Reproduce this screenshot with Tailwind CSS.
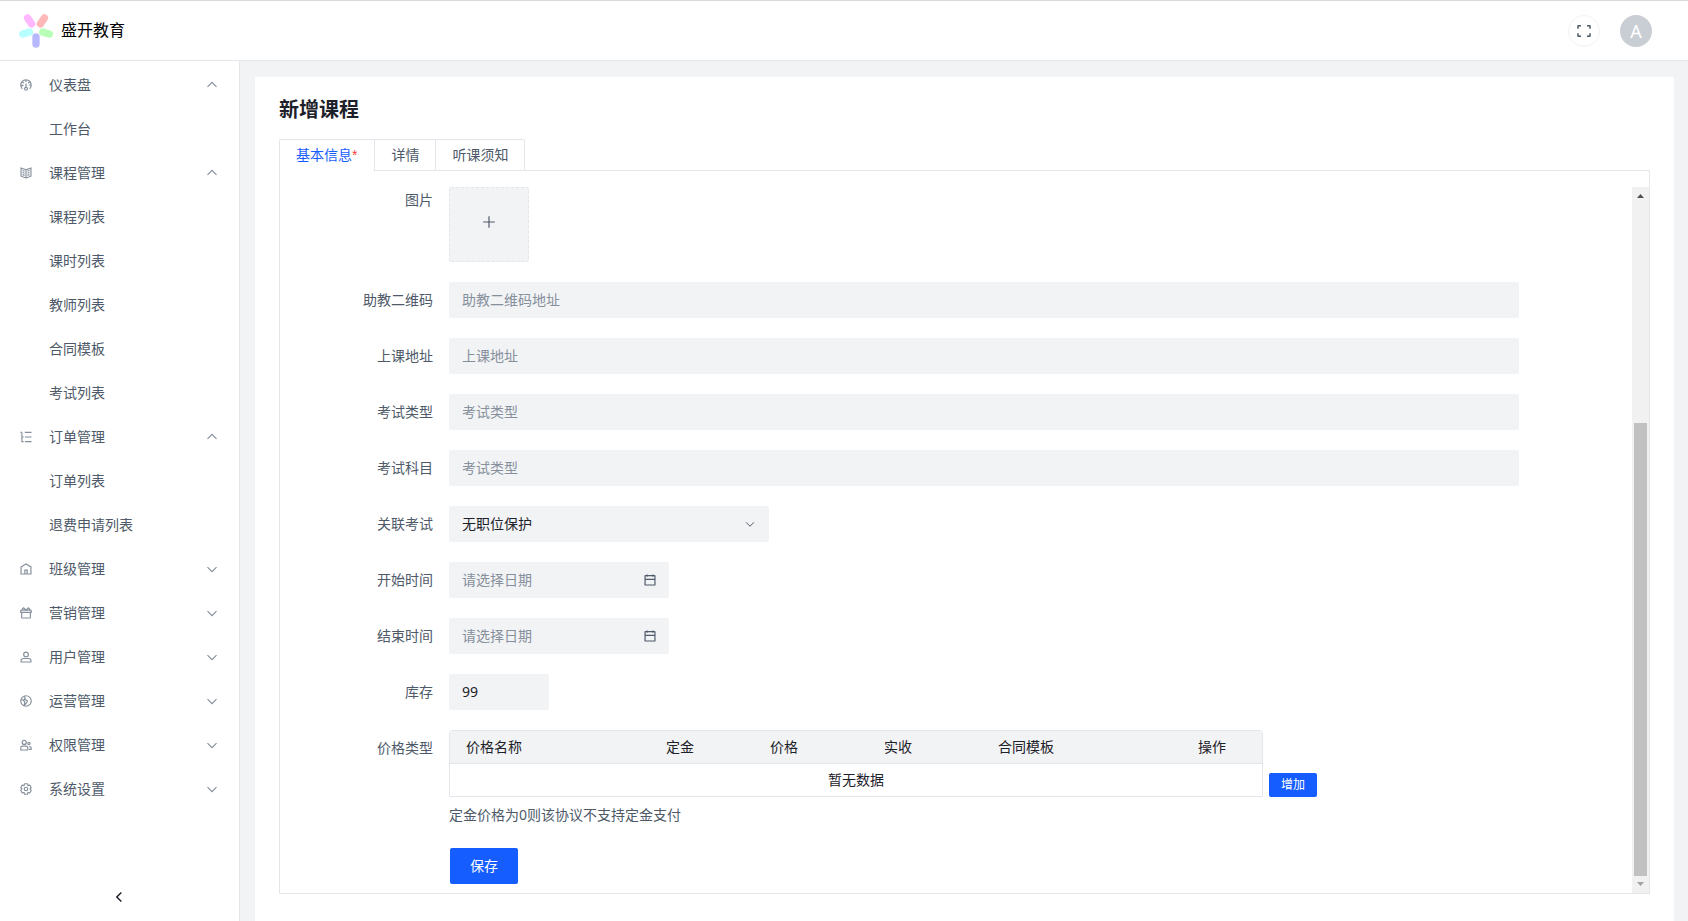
<!DOCTYPE html>
<html lang="zh-CN">
<head>
<meta charset="utf-8">
<meta name="viewport" content="width=device-width, initial-scale=1">
<title>盛开教育 - 新增课程</title>
<script src="https://cdn.jsdelivr.net/npm/@tailwindcss/browser@4"></script>
</head>
<body class="flex h-screen flex-col overflow-hidden border-t border-[#dadada] bg-[#f2f3f5] font-['Noto_Sans','Noto_Sans_CJK_SC',sans-serif] text-sm text-[#4e5969]">

<svg class="hidden" aria-hidden="true">
  <symbol id="down" viewBox="0 0 48 48"><path d="M39.6 17.443 24.043 33 8.487 17.443"/></symbol>
  <symbol id="up" viewBox="0 0 48 48"><path d="M39.6 30.557 24.043 15 8.487 30.557"/></symbol>
  <symbol id="calendar" viewBox="0 0 48 48"><path d="M7 22h34M14 5v8m20-8v8M8 41h32a1 1 0 0 0 1-1V10a1 1 0 0 0-1-1H8a1 1 0 0 0-1 1v30a1 1 0 0 0 1 1Z"/></symbol>
</svg>

<header class="flex h-15 shrink-0 items-center justify-between border-b border-[#e5e6eb] bg-white pr-9 pl-4">
  <div class="flex items-center gap-[5px]">
    <svg class="size-10" viewBox="0 0 40 40" fill="none" stroke-width="7.4" stroke-linecap="round" aria-hidden="true">
      <path stroke="#ffb8ff" d="M11.600 7l4 5.800"/>
      <path stroke="#ffb8b8" d="M28.400 7l-4 5.800"/>
      <path stroke="#b8ffff" d="M6.800 23l6.600-1.900"/>
      <path stroke="#b8ffb8" d="M33.400 23l-6.600-1.900"/>
      <path stroke="#b8b8ff" d="M20 26v7"/>
    </svg>
    <h1 class="pb-0.5 text-base leading-6 text-black">盛开教育</h1>
  </div>
  <div class="flex items-center gap-5">
    <button type="button" aria-label="全屏" class="flex size-8 items-center justify-center rounded-full border border-[#f2f3f5]">
      <svg class="size-4" viewBox="0 0 48 48" fill="none" stroke="currentColor" stroke-width="4.500" aria-hidden="true"><path d="M42 17V9a1 1 0 0 0-1-1h-8M6 17V9a1 1 0 0 1 1-1h8m27 23v8a1 1 0 0 1-1 1h-8M6 31v8a1 1 0 0 0 1 1h8"/></svg>
    </button>
    <button type="button" aria-label="账户" class="flex size-8 items-center justify-center rounded-full bg-[#c9cdd4] text-lg text-white">A</button>
  </div>
</header>

<div class="flex min-h-0 flex-1">
  <aside class="flex w-60 shrink-0 flex-col border-r border-[#e5e6eb] bg-white">
    <nav class="flex flex-1 flex-col gap-1 py-1 pr-5 pl-[19px] leading-10">
      <button type="button" class="flex items-center text-left">
        <svg class="mr-4 size-3.5 text-[#86909c]" viewBox="0 0 48 48" fill="none" stroke="currentColor" stroke-width="4"><path d="M41.808 24c.118 4.63-1.486 9.333-5.21 13m5.21-13h-8.309m8.309 0c-.112-4.38-1.767-8.694-4.627-12M24 6c5.531 0 10.07 2.404 13.18 6M24 6c-5.724 0-10.384 2.574-13.5 6.38M24 6v7.5M37.18 12 31 17.5m-20.5-5.12L17 17.5m-6.5-5.12C6.99 16.662 5.44 22.508 6.53 28m4.872 9c-2.65-2.609-4.226-5.742-4.873-9m0 0 8.97-3.5M24 32a5 5 0 1 0 0 10 5 5 0 0 0 0-10Zm0 0V19"/></svg>
        <span class="flex-1">仪表盘</span>
        <svg class="size-3.5 text-[#86909c]" fill="none" stroke="currentColor" stroke-width="4"><use href="#up"/></svg>
      </button>
      <a href="#" class="pl-[30px]">工作台</a>
      <button type="button" class="flex items-center text-left">
        <svg class="mr-4 size-3.5 text-[#86909c]" viewBox="0 0 48 48" fill="none" stroke="currentColor" stroke-width="4"><path d="M24 13 7 7v28l17 6 17-6V7l-17 6Zm0 0v27.500M29 18l7-2.500M29 25l7-2.500M29 32l7-2.500M19 18l-7-2.500m7 9.500-7-2.500m7 9.500-7-2.500"/></svg>
        <span class="flex-1">课程管理</span>
        <svg class="size-3.5 text-[#86909c]" fill="none" stroke="currentColor" stroke-width="4"><use href="#up"/></svg>
      </button>
      <a href="#" class="pl-[30px]">课程列表</a>
      <a href="#" class="pl-[30px]">课时列表</a>
      <a href="#" class="pl-[30px]">教师列表</a>
      <a href="#" class="pl-[30px]">合同模板</a>
      <a href="#" class="pl-[30px]">考试列表</a>
      <button type="button" class="flex items-center text-left">
        <svg class="mr-4 size-3.5 text-[#86909c]" viewBox="0 0 48 48" fill="none" stroke="currentColor" stroke-width="4"><path d="M20 8h23M20 24h23M20 40h23M10 10v30h6M10 24h6M5 8h6"/></svg>
        <span class="flex-1">订单管理</span>
        <svg class="size-3.5 text-[#86909c]" fill="none" stroke="currentColor" stroke-width="4"><use href="#up"/></svg>
      </button>
      <a href="#" class="pl-[30px]">订单列表</a>
      <a href="#" class="pl-[30px]">退费申请列表</a>
      <button type="button" class="flex items-center text-left">
        <svg class="mr-4 size-3.5 text-[#86909c]" viewBox="0 0 48 48" fill="none" stroke="currentColor" stroke-width="4"><path d="M7 17 24 7l17 10v24H7V17ZM20 28h8v13h-8V28Z"/></svg>
        <span class="flex-1">班级管理</span>
        <svg class="size-3.5 text-[#86909c]" fill="none" stroke="currentColor" stroke-width="4"><use href="#down"/></svg>
      </button>
      <button type="button" class="flex items-center text-left">
        <svg class="mr-4 size-3.5 text-[#86909c]" viewBox="0 0 48 48" fill="none" stroke="currentColor" stroke-width="4"><path d="M13.450 14.043H8a2 2 0 0 0-2 2v6h36v-6a2 2 0 0 0-2-2h-5.450m-21.100 0L11.500 10 16 6l8 8 8-8 4.500 4-1.950 4.043m-21.100 0h21.100M9 22.043h30v17a2 2 0 0 1-2 2H11a2 2 0 0 1-2-2v-17Z"/></svg>
        <span class="flex-1">营销管理</span>
        <svg class="size-3.5 text-[#86909c]" fill="none" stroke="currentColor" stroke-width="4"><use href="#down"/></svg>
      </button>
      <button type="button" class="flex items-center text-left">
        <svg class="mr-4 size-3.5 text-[#86909c]" viewBox="0 0 48 48" fill="none" stroke="currentColor" stroke-width="4"><path d="M7 37c0-4.970 4.030-8 9-8h16c4.970 0 9 3.030 9 8v3a1 1 0 0 1-1 1H8a1 1 0 0 1-1-1v-3Z"/><circle cx="24" cy="15" r="8"/></svg>
        <span class="flex-1">用户管理</span>
        <svg class="size-3.5 text-[#86909c]" fill="none" stroke="currentColor" stroke-width="4"><use href="#down"/></svg>
      </button>
      <button type="button" class="flex items-center text-left">
        <svg class="mr-4 size-3.5 text-[#86909c]" viewBox="0 0 48 48" fill="none" stroke="currentColor" stroke-width="4"><path d="M15 21.500 6.704 19M15 21.500l4.683 5.152a1 1 0 0 1 .25.814L18 40.976l10.918-16.117a1 1 0 0 0-.298-1.409L21.500 19 15 21.500Zm0 0 6.062-6.995a1 1 0 0 0 .138-1.103L18 7.024M42 24c0 9.941-8.059 18-18 18S6 33.941 6 24 14.059 6 24 6s18 8.059 18 18Z"/></svg>
        <span class="flex-1">运营管理</span>
        <svg class="size-3.5 text-[#86909c]" fill="none" stroke="currentColor" stroke-width="4"><use href="#down"/></svg>
      </button>
      <button type="button" class="flex items-center text-left">
        <svg class="mr-4 size-3.5 text-[#86909c]" viewBox="0 0 48 48" fill="none" stroke="currentColor" stroke-width="4"><circle cx="18" cy="15" r="7"/><circle cx="34" cy="19" r="4"/><path d="M6 34a6 6 0 0 1 6-6h12a6 6 0 0 1 6 6v6a1 1 0 0 1-1 1H7a1 1 0 0 1-1-1v-6ZM34 30h4a4 4 0 0 1 4 4v4a1 1 0 0 1-1 1h-7"/></svg>
        <span class="flex-1">权限管理</span>
        <svg class="size-3.5 text-[#86909c]" fill="none" stroke="currentColor" stroke-width="4"><use href="#down"/></svg>
      </button>
      <button type="button" class="flex items-center text-left">
        <svg class="mr-4 size-3.5 text-[#86909c]" viewBox="0 0 48 48" fill="none" stroke="currentColor" stroke-width="4"><path d="M18.797 6.732A1 1 0 0 1 19.760 6h8.480a1 1 0 0 1 .964.732l1.285 4.628a1 1 0 0 0 1.213.7l4.651-1.200a1 1 0 0 1 1.116.468l4.240 7.344a1 1 0 0 1-.153 1.200L38.193 23.300a1 1 0 0 0 0 1.402l3.364 3.427a1 1 0 0 1 .153 1.200l-4.240 7.344a1 1 0 0 1-1.116.468l-4.650-1.200a1 1 0 0 0-1.214.7l-1.285 4.628a1 1 0 0 1-.964.732h-8.480a1 1 0 0 1-.963-.732L17.510 36.640a1 1 0 0 0-1.213-.7l-4.650 1.200a1 1 0 0 1-1.116-.468l-4.240-7.344a1 1 0 0 1 .153-1.200L9.809 24.700a1 1 0 0 0 0-1.402l-3.364-3.427a1 1 0 0 1-.153-1.200l4.240-7.344a1 1 0 0 1 1.116-.468l4.650 1.200a1 1 0 0 0 1.213-.7l1.286-4.628ZM30 24a6 6 0 1 1-12 0 6 6 0 0 1 12 0Z"/></svg>
        <span class="flex-1">系统设置</span>
        <svg class="size-3.5 text-[#86909c]" fill="none" stroke="currentColor" stroke-width="4"><use href="#down"/></svg>
      </button>
    </nav>
    <button type="button" aria-label="收起菜单" class="flex h-12 shrink-0 items-center justify-center pr-0.5 text-[#1d2129]">
      <svg class="size-3.5" viewBox="0 0 48 48" fill="none" stroke="currentColor" stroke-width="5"><path d="M32 8.400 16.444 23.956 32 39.513"/></svg>
    </button>
  </aside>

  <main class="mt-4 mr-3.5 ml-[15px] min-w-0 flex-1 bg-white px-6 pt-4">
    <h2 class="text-xl leading-[34px] font-bold text-[#1d2129]">新增课程</h2>

    <div role="tablist" class="mt-3 flex h-8 leading-[30px]">
      <button type="button" role="tab" aria-selected="true" class="flex rounded-tl-xs border-t border-l border-[#e5e6eb] pr-[17px] pl-4 text-[#165dff]">基本信息<span class="font-['Liberation_Sans',sans-serif] text-[#f53f3f]">*</span></button>
      <button type="button" role="tab" aria-selected="false" class="border border-r-0 border-[#e5e6eb] px-4">详情</button>
      <button type="button" role="tab" aria-selected="false" class="rounded-tr-xs border border-[#e5e6eb] px-4">听课须知</button>
      <div class="flex-1 border-b border-[#e5e6eb]"></div>
    </div>

    <div class="flex border border-t-0 border-[#e5e6eb] pt-4">
      <form class="grid min-w-0 flex-1 grid-cols-[153px_minmax(0,1fr)] gap-x-4 gap-y-5 pr-[113px] pb-[9px] [&>label]:text-right [&>label]:leading-9 [&>span]:text-right">
        <span class="leading-[26px]">图片</span>
        <button type="button" aria-label="上传图片" class="flex h-[75px] w-20 items-center justify-center rounded-xs border border-dashed border-[#e5e6eb] bg-[#f2f3f5] pb-1.5">
          <svg class="size-3.5" viewBox="0 0 48 48" fill="none" stroke="currentColor" stroke-width="4"><path d="M4 24h40M24 4v40"/></svg>
        </button>

        <label for="qr">助教二维码</label>
        <input id="qr" type="text" placeholder="助教二维码地址" class="h-9 w-full rounded-xs bg-[#f2f3f5] px-[13px] pb-0.5 text-[#1d2129] placeholder:text-[#86909c]">

        <label for="address">上课地址</label>
        <input id="address" type="text" placeholder="上课地址" class="h-9 w-full rounded-xs bg-[#f2f3f5] px-[13px] pb-0.5 text-[#1d2129] placeholder:text-[#86909c]">

        <label for="exam-type">考试类型</label>
        <input id="exam-type" type="text" placeholder="考试类型" class="h-9 w-full rounded-xs bg-[#f2f3f5] px-[13px] pb-0.5 text-[#1d2129] placeholder:text-[#86909c]">

        <label for="exam-subject">考试科目</label>
        <input id="exam-subject" type="text" placeholder="考试类型" class="h-9 w-full rounded-xs bg-[#f2f3f5] px-[13px] pb-0.5 text-[#1d2129] placeholder:text-[#86909c]">

        <label for="exam">关联考试</label>
        <div class="relative w-80">
          <select id="exam" class="h-9 w-full appearance-none rounded-xs bg-[#f2f3f5] px-[13px] text-[#1d2129]"><option>无职位保护</option></select>
          <svg class="pointer-events-none absolute top-3 right-[13px] size-3" fill="none" stroke="currentColor" stroke-width="4"><use href="#down"/></svg>
        </div>

        <label for="start">开始时间</label>
        <div class="flex h-9 w-55 items-center rounded-xs bg-[#f2f3f5] pr-3 pl-[13px]">
          <input id="start" type="text" placeholder="请选择日期" class="min-w-0 flex-1 text-[#1d2129] placeholder:text-[#86909c]">
          <svg class="size-3.5" fill="none" stroke="currentColor" stroke-width="4"><use href="#calendar"/></svg>
        </div>

        <label for="end">结束时间</label>
        <div class="flex h-9 w-55 items-center rounded-xs bg-[#f2f3f5] pr-3 pl-[13px]">
          <input id="end" type="text" placeholder="请选择日期" class="min-w-0 flex-1 text-[#1d2129] placeholder:text-[#86909c]">
          <svg class="size-3.5" fill="none" stroke="currentColor" stroke-width="4"><use href="#calendar"/></svg>
        </div>

        <label for="stock">库存</label>
        <input id="stock" type="text" inputmode="numeric" value="99" class="h-9 w-25 rounded-xs bg-[#f2f3f5] px-[13px] pb-0.5 text-[#1d2129]">

        <span class="leading-9">价格类型</span>
        <div>
          <div class="flex items-end gap-1.5">
            <div class="overflow-hidden rounded-t-sm border border-[#e5e6eb]">
              <table class="w-[812px] table-fixed border-collapse text-left leading-8 text-[#1d2129]">
                <thead>
                  <tr class="border-b border-[#e5e6eb] bg-[#f2f3f5] [&>th]:px-4 [&>th]:font-normal">
                    <th class="w-50">价格名称</th>
                    <th class="w-26">定金</th>
                    <th class="w-[114px]">价格</th>
                    <th class="w-[114px]">实收</th>
                    <th class="w-50">合同模板</th>
                    <th class="w-20">操作</th>
                  </tr>
                </thead>
                <tbody>
                  <tr><td colspan="6" class="text-center">暂无数据</td></tr>
                </tbody>
              </table>
            </div>
            <button type="button" class="h-6 w-12 rounded-xs bg-[#165dff] text-xs text-white">增加</button>
          </div>
          <p class="mt-[5px] leading-[26px]">定金价格为0则该协议不支持定金支付</p>
        </div>

        <button type="submit" class="col-start-2 ml-px h-9 w-17 rounded-xs bg-[#165dff] text-white">保存</button>
      </form>

      <div class="flex w-[17px] flex-col items-center bg-[#f1f1f1]" aria-hidden="true">
        <svg class="h-[17px] w-[17px]" viewBox="0 0 17 17" fill="#505050"><path d="M5 11l3.500-4 3.500 4z"/></svg>
        <div class="flex-[219]"></div>
        <div class="w-[13px] flex-[453] bg-[#c1c1c1]"></div>
        <svg class="h-[17px] w-[17px]" viewBox="0 0 17 17" fill="#a3a3a3"><path d="M5 6l3.500 4 3.500-4z"/></svg>
      </div>
    </div>
  </main>
</div>
</body>
</html>
